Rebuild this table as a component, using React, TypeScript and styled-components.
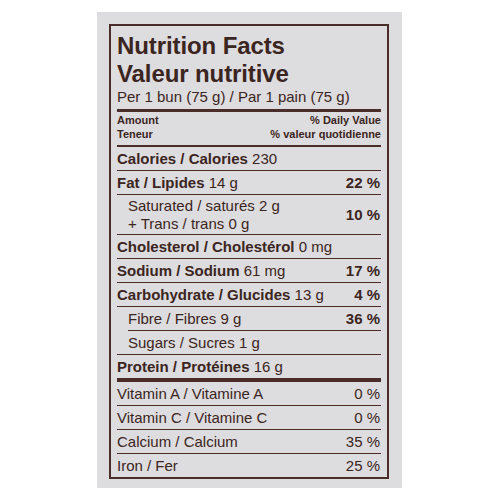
import styled, { createGlobalStyle } from 'styled-components';

const ink = '#3b2521';
const rule = '#4a2c28';

const GlobalStyle = createGlobalStyle`
  html, body {
    margin: 0;
    padding: 0;
    background: #ffffff;
  }
  body {
    font-family: "Liberation Sans", Arial, sans-serif;
    color: ${ink};
  }
`;

const Page = styled.div`
  display: flex;
  justify-content: center;
  width: 500px;
  height: 500px;
`;

const Packet = styled.div`
  display: flex;
  flex-direction: column;
  align-items: center;
  width: 305px;
  height: 476px;
  margin-top: 12px;
  margin-left: -1px;
  background: #dddcdf;
`;

const Label = styled.div`
  box-sizing: border-box;
  width: 280px;
  margin-top: 12px;
  margin-left: -1px;
  padding: 6px 6px 0;
  border: 2px solid ${rule};
`;

const Title = styled.h1`
  margin: 0;
  font-size: 24px;
  line-height: 28px;
  font-weight: 700;
  letter-spacing: -0.1px;
`;

const Serving = styled.div`
  font-size: 15px;
  line-height: 18px;
  padding-bottom: 3px;
  border-bottom: 3px solid ${rule};
`;

const Header = styled.div`
  display: grid;
  grid-template-columns: 1fr auto;
  padding: 1px 0 4px;
  border-bottom: 2px solid ${rule};
  font-size: 11px;
  line-height: 14px;
  font-weight: 700;

  .right {
    text-align: right;
  }
`;

const Row = styled.div<{ $indent?: boolean; $lineIndent?: boolean; $rule?: number; $tall?: boolean }>`
  display: flex;
  justify-content: space-between;
  align-items: center;
  height: ${({ $tall }) => ($tall ? 39 : 23)}px;
  margin-left: ${({ $lineIndent }) => ($lineIndent ? 11 : 0)}px;
  padding-left: ${({ $indent }) => ($indent ? 11 : 0)}px;
  padding-right: 1px;
  border-bottom: ${({ $rule = 1 }) => $rule}px solid ${rule};
  font-size: 15px;
  line-height: 18px;

  &:last-child {
    border-bottom: none;
  }

  b {
    font-weight: 700;
  }
`;

const Pct = styled.span<{ $bold?: boolean }>`
  font-weight: ${({ $bold }) => ($bold ? 700 : 400)};
  white-space: nowrap;
`;

export default function App() {
  return (
    <Page>
      <GlobalStyle />
      <Packet>
        <Label>
          <Title>
            Nutrition Facts
            <br />
            Valeur nutritive
          </Title>
          <Serving>Per 1 bun (75 g) / Par 1 pain (75 g)</Serving>
          <Header>
            <span>Amount</span>
            <span className="right">% Daily Value</span>
            <span>Teneur</span>
            <span className="right">% valeur quotidienne</span>
          </Header>

          <Row>
            <span><b>Calories / Calories</b> 230</span>
          </Row>
          <Row>
            <span><b>Fat / Lipides</b> 14 g</span>
            <Pct $bold>22 %</Pct>
          </Row>
          <Row $indent $tall>
            <span>
              Saturated / saturés 2 g
              <br />
              + Trans / trans 0 g
            </span>
            <Pct $bold>10 %</Pct>
          </Row>
          <Row>
            <span><b>Cholesterol / Cholestérol</b> 0 mg</span>
          </Row>
          <Row>
            <span><b>Sodium / Sodium</b> 61 mg</span>
            <Pct $bold>17 %</Pct>
          </Row>
          <Row>
            <span><b>Carbohydrate / Glucides</b> 13 g</span>
            <Pct $bold>4 %</Pct>
          </Row>
          <Row $lineIndent>
            <span>Fibre / Fibres 9 g</span>
            <Pct $bold>36 %</Pct>
          </Row>
          <Row $indent>
            <span>Sugars / Sucres 1 g</span>
          </Row>
          <Row $rule={4}>
            <span><b>Protein / Protéines</b> 16 g</span>
          </Row>
          <Row>
            <span>Vitamin A / Vitamine A</span>
            <Pct>0 %</Pct>
          </Row>
          <Row>
            <span>Vitamin C / Vitamine C</span>
            <Pct>0 %</Pct>
          </Row>
          <Row>
            <span>Calcium / Calcium</span>
            <Pct>35 %</Pct>
          </Row>
          <Row>
            <span>Iron / Fer</span>
            <Pct>25 %</Pct>
          </Row>
        </Label>
      </Packet>
    </Page>
  );
}
